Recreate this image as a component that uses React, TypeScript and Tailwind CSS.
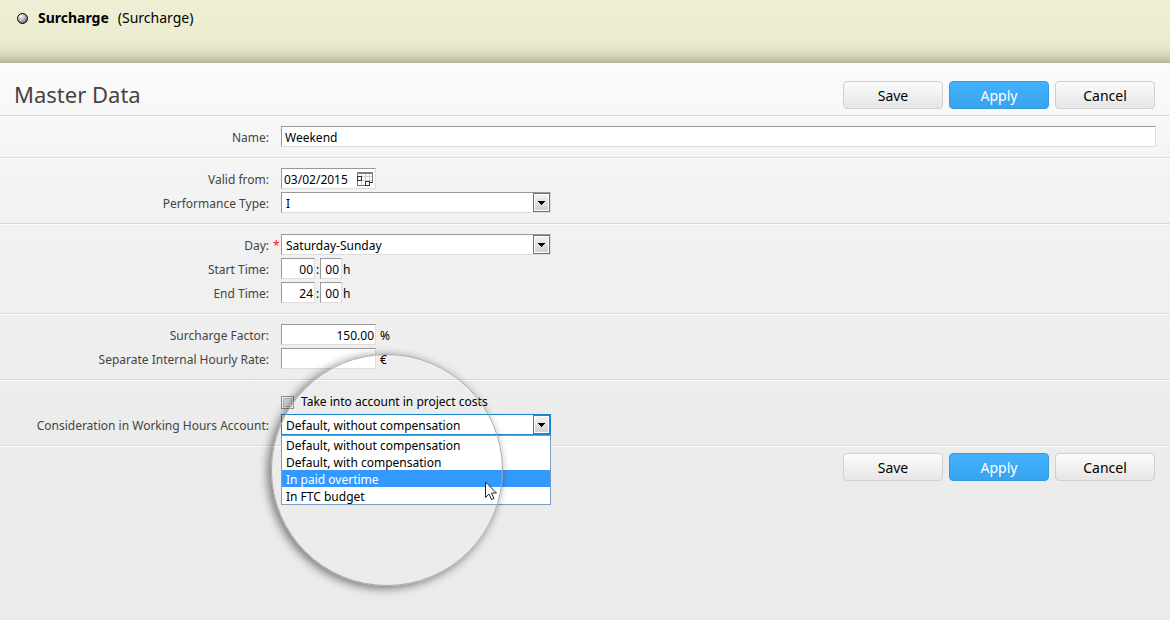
import type { ReactNode } from "react";

const fieldFrame =
  "border border-t-[#999] border-l-[#999] border-r-[#ddd] border-b-[#ddd] bg-white text-black outline-none";

function Section({ children }: { children: ReactNode }) {
  return (
    <section className="border-b border-white">
      <div className="border-b border-[#d9d9d9] pt-[9px] pb-[7px]">{children}</div>
    </section>
  );
}

function Row({
  label,
  htmlFor,
  required = false,
  children,
}: {
  label?: string;
  htmlFor?: string;
  required?: boolean;
  children: ReactNode;
}) {
  return (
    <div className="flex h-6 items-start">
      <div className="w-[269px] shrink-0 text-right leading-6 text-[#444]">
        {label && <label htmlFor={htmlFor}>{label}</label>}
      </div>
      <div className="w-3 shrink-0 pl-1 leading-6 text-[#ff2020]">{required && "*"}</div>
      <div className="flex min-w-0 flex-1 items-start pr-[14px] leading-6">{children}</div>
    </div>
  );
}

function Select({ id, options, active = false }: { id: string; options: string[]; active?: boolean }) {
  return (
    <div className="relative h-[21px] w-[270px]">
      <select
        id={id}
        className={
          active
            ? "block h-[21px] w-full appearance-none border border-[#1c86cd] bg-white pt-0.5 pl-1 leading-[17px] text-black outline-none"
            : `block h-[21px] w-full appearance-none pt-0.5 pl-1 leading-[17px] ${fieldFrame}`
        }
      >
        {options.map((o) => (
          <option key={o}>{o}</option>
        ))}
      </select>
      <span className="pointer-events-none absolute top-px right-px flex h-[19px] w-[17px] items-center justify-center border border-[#707070] bg-linear-to-b from-[#f4f4f4] to-[#cfcfcf] shadow-[inset_0_0_0_1px_#fff]">
        <svg width="7" height="4" viewBox="0 0 7 4" shapeRendering="crispEdges" aria-hidden="true">
          <path d="M0 0h7v1H6v1H5v1H4v1H3V3H2V2H1V1H0z" fill="#000" />
        </svg>
      </span>
    </div>
  );
}

function Actions() {
  const plain =
    "h-7 w-[100px] rounded-sm border border-[#d0d0d0] bg-linear-to-b from-[#fbfbfb] to-[#e6e6e6] pt-px text-[14px] text-black";
  return (
    <div className="flex gap-[6px]">
      <button type="button" className={plain}>Save</button>
      <button
        type="button"
        className="h-7 w-[100px] rounded-sm border border-[#319be0] bg-linear-to-b from-[#41b1ff] to-[#38a4ee] pt-px text-[14px] text-white"
      >
        Apply
      </button>
      <button type="button" className={plain}>Cancel</button>
    </div>
  );
}

function CalendarIcon() {
  return (
    <svg width="16" height="14" viewBox="0 0 16 14" shapeRendering="crispEdges" aria-hidden="true">
      <path d="M0 0h16v11h-4v3H0z" fill="#fff" />
      <path d="M4.5 2v11M8.5 2v7M12.5 2v7M1 4.5h14M1 8.5h14" stroke="#ccc" fill="none" />
      <path d="M0 0h16v2H0z" fill="#808080" />
      <path d="M0.5 2v11M15.5 2v9M0 13.5h9" stroke="#777" fill="none" />
      <path d="M0.5 4.5h4v4h-4zM8.5 9.5h4v4h-4zM12.5 10.5h3" stroke="#333" fill="none" />
    </svg>
  );
}

function TimeInput({ id, hours, minutes, name }: { id: string; hours: string; minutes: string; name: string }) {
  return (
    <>
      <input id={id} defaultValue={hours} className={`h-[21px] w-[34px] pt-0.5 pr-px text-right ${fieldFrame}`} />
      <span className="w-[5px] text-center text-black">:</span>
      <input
        aria-label={`${name} minutes`}
        defaultValue={minutes}
        className={`h-[21px] w-[22px] pt-0.5 pr-0.5 text-right ${fieldFrame}`}
      />
      <span className="pl-px text-black">h</span>
    </>
  );
}

const accountOptions = [
  "Default, without compensation",
  "Default, with compensation",
  "In paid overtime",
  "In FTC budget",
];

export default function App() {
  return (
    <div className="flex min-h-screen flex-col bg-[#ebebeb] font-['Noto_Sans',sans-serif] text-[12px]">
      <header className="flex h-[63px] items-start bg-[linear-gradient(to_bottom,#eeeed4_0px,#ededd1_38px,#e2e2c6_50px,#cdcdb3_58px,#b4b49c_63px)] pt-2 pl-4 text-[14px] leading-5 text-black">
        <svg className="mt-1 mr-[9px]" width="13" height="13" viewBox="0 0 13 13" aria-hidden="true">
          <defs>
            <radialGradient id="bullet" cx="0.35" cy="0.3" r="0.8">
              <stop offset="0" stopColor="#fff" />
              <stop offset="0.5" stopColor="#b4b4b4" />
              <stop offset="1" stopColor="#555" />
            </radialGradient>
          </defs>
          <circle cx="6.5" cy="6.5" r="5" fill="url(#bullet)" stroke="#000" />
        </svg>
        <strong className="mr-[9px] font-bold">Surcharge</strong>
        <span>(Surcharge)</span>
      </header>

      <main className="flex-1 bg-[linear-gradient(to_bottom,#fbfbfb_0px,#f3f3f3_120px,#ececec_360px,#ebebeb_100%)]">
        <form>
          <div className="border-b border-white">
            <div className="flex items-start justify-between border-b border-[#d9d9d9] pt-[18px] pr-[15px] pb-[6px] pl-[14px]">
              <h1 className="text-[22px] leading-[26px] text-[#444]">Master Data</h1>
              <Actions />
            </div>
          </div>

          <Section>
            <Row label="Name:" htmlFor="name">
              <input id="name" defaultValue="Weekend" className={`h-[21px] w-full pt-0.5 pl-[3px] ${fieldFrame}`} />
            </Row>
          </Section>

          <Section>
            <Row label="Valid from:" htmlFor="valid">
              <div className={`flex h-[21px] w-[95px] items-center justify-between px-[2px] ${fieldFrame}`}>
                <input id="valid" defaultValue="03/02/2015" className="h-[19px] w-[72px] pt-0.5 outline-none" />
                <button type="button" aria-label="Open calendar">
                  <CalendarIcon />
                </button>
              </div>
            </Row>
            <Row label="Performance Type:" htmlFor="type">
              <Select id="type" options={["I"]} />
            </Row>
          </Section>

          <Section>
            <Row label="Day:" htmlFor="day" required>
              <Select id="day" options={["Saturday-Sunday"]} />
            </Row>
            <Row label="Start Time:" htmlFor="start">
              <TimeInput id="start" name="Start" hours="00" minutes="00" />
            </Row>
            <Row label="End Time:" htmlFor="end">
              <TimeInput id="end" name="End" hours="24" minutes="00" />
            </Row>
          </Section>

          <Section>
            <Row label="Surcharge Factor:" htmlFor="factor">
              <input
                id="factor"
                defaultValue="150.00"
                className={`h-[21px] w-[95px] pt-0.5 pr-px text-right ${fieldFrame}`}
              />
              <span className="pl-1 text-black">%</span>
            </Row>
            <Row label="Separate Internal Hourly Rate:" htmlFor="rate">
              <input id="rate" className={`h-[21px] w-[95px] pt-0.5 pr-px text-right ${fieldFrame}`} />
              <span className="pl-1 text-black">€</span>
            </Row>
          </Section>

          <Section>
            <Row>
              <label className="flex h-6 items-center gap-[7px] text-black">
                <input
                  type="checkbox"
                  className="h-[13px] w-[13px] appearance-none border border-[#8e8f8f] bg-linear-to-br from-[#c4c8cc] to-[#f4f4f4] shadow-[inset_0_0_0_1px_#f4f4f4,inset_0_0_0_2px_#b4b8bb]"
                />
                Take into account in project costs
              </label>
            </Row>
            <Row label="Consideration in Working Hours Account:" htmlFor="account">
              <div className="relative">
                <Select id="account" options={accountOptions} active />
                <ul
                  role="listbox"
                  aria-label="Consideration in Working Hours Account"
                  className="absolute top-[21px] left-0 z-10 w-full border border-[#7a9cc0] bg-white text-black"
                >
                  {accountOptions.map((o) => (
                    <li
                      key={o}
                      role="option"
                      aria-selected={o === "In paid overtime"}
                      className="h-[17px] pl-1 leading-[19px] aria-selected:bg-[#3399ff] aria-selected:text-white"
                    >
                      {o}
                    </li>
                  ))}
                </ul>
                <div className="pointer-events-none absolute -top-[60px] -left-[10px] z-20 h-[232px] w-[232px] rounded-full border border-[#aaa] shadow-[-3px_2px_9px_1px_rgba(0,0,0,0.45)]" />
                <svg
                  className="pointer-events-none absolute top-[67px] left-[204px] z-30"
                  width="13"
                  height="20"
                  viewBox="0 0 13 20"
                  aria-hidden="true"
                >
                  <path
                    d="M.5 1v15.5L4 13l2.6 5.5 2.4-1L6.5 12h5z"
                    fill="#fff"
                    stroke="#222"
                    strokeLinejoin="round"
                  />
                </svg>
              </div>
            </Row>
          </Section>

          <div className="flex justify-end pt-[6px] pr-[15px]">
            <Actions />
          </div>
        </form>
      </main>
    </div>
  );
}
